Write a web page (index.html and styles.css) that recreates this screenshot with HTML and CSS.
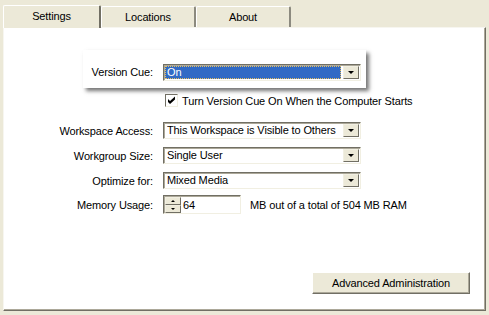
FILE: index.html
```html
<!DOCTYPE html>
<html lang="en">
<head>
    <meta charset="UTF-8">
    <title>Version Cue Preferences</title>
    <link rel="stylesheet" href="styles.css">
</head>
<body>
    <div class="window">
        <div class="tabs">
            <div class="tab active">Settings</div>
            <div class="tab">Locations</div>
            <div class="tab">About</div>
        </div>

        <div class="panel">
            <div class="focus-box">
                <span class="label">Version Cue:</span>
                <div class="select focused">
                    <span class="value">On</span>
                    <span class="drop"></span>
                </div>
            </div>

            <div class="check-row">
                <span class="checkbox">
                    <svg width="9" height="9" viewBox="0 0 9 9"><path d="M1 3 L3 5 L8 0.5 L8 3.5 L3 8 L1 6 Z" fill="#000"/></svg>
                </span>
                <span>Turn Version Cue On When the Computer Starts</span>
            </div>

            <div class="row first">
                <span class="label">Workspace Access:</span>
                <div class="select">
                    <span class="value">This Workspace is Visible to Others</span>
                    <span class="drop"></span>
                </div>
            </div>
            <div class="row">
                <span class="label">Workgroup Size:</span>
                <div class="select">
                    <span class="value">Single User</span>
                    <span class="drop"></span>
                </div>
            </div>
            <div class="row">
                <span class="label">Optimize for:</span>
                <div class="select">
                    <span class="value">Mixed Media</span>
                    <span class="drop"></span>
                </div>
            </div>
            <div class="row memory">
                <span class="label">Memory Usage:</span>
                <div class="spinner">
                    <div class="spin-btns">
                        <span class="spin up"></span>
                        <span class="spin down"></span>
                    </div>
                    <span class="spin-value">64</span>
                </div>
                <span class="note">MB out of a total of 504 MB RAM</span>
            </div>

            <div class="footer">
                <button class="btn">Advanced Administration</button>
            </div>
        </div>
    </div>
</body>
</html>
```

FILE: styles.css
```css
body {
    margin: 0;
    background-color: #ece9d8;
    font-family: "Liberation Sans", Arial, sans-serif;
    font-size: 11px;
    letter-spacing: -0.13px;
    color: #000;
}
.window {
    height: 315px;
    display: flex;
    flex-direction: column;
    padding: 4px 3px 4px 3px;
    box-sizing: border-box;
}
.tabs {
    display: flex;
    align-items: flex-end;
    height: 23px;
    position: relative;
    z-index: 1;
}
.tab {
    width: 92px;
    height: 20px;
    line-height: 20px;
    text-align: center;
    border-top: 1px solid #fff;
    border-left: 1px solid #fff;
    border-right: 2px solid #8c8a7f;
    border-radius: 2px 2px 0 0;
    background-color: #ece9d8;
}
.tab.active {
    width: 95px;
    height: 22px;
    line-height: 20px;
    margin-bottom: -1px;
    border-right-color: #716f64;
}
.panel {
    flex: 1;
    display: flex;
    flex-direction: column;
    background-color: #fff;
    border-top: 1px solid #f7f6f0;
    border-left: 1px solid #f7f6f0;
    border-right: 1px solid #716f64;
    border-bottom: 1px solid #716f64;
    box-shadow: inset -1px -1px 0 #aca899;
}
.label {
    text-align: right;
}
.focus-box {
    display: flex;
    align-items: flex-start;
    margin: 22px 0 0 79px;
    width: 283px;
    height: 38px;
    padding: 14px 5px 0 0;
    box-sizing: border-box;
    background-color: #fff;
    box-shadow: 3px 3px 4px rgba(0, 0, 0, 0.55);
}
.focus-box .label {
    width: 70px;
    margin-right: 10px;
    line-height: 17px;
}
.select {
    width: 198px;
    height: 17px;
    box-sizing: border-box;
    display: flex;
    align-items: center;
    border-top: 1px solid #716f64;
    border-left: 1px solid #716f64;
    border-right: 1px solid #f1efe2;
    border-bottom: 1px solid #f1efe2;
    box-shadow: inset 1px 1px 0 #aca899;
    background-color: #fff;
}
.select .value {
    flex: 1;
    padding-left: 3px;
    line-height: 13px;
    white-space: nowrap;
    overflow: hidden;
}
.select.focused .value {
    margin: 1px 2px 1px 1px;
    padding-left: 2px;
    background-color: #316ac5;
    color: #fff;
    outline: 1px dotted #e8c060;
    outline-offset: -1px;
}
.drop {
    width: 16px;
    height: 13px;
    margin-right: 1px;
    box-sizing: border-box;
    background-color: #ece9d8;
    border-top: 1px solid #f1efe2;
    border-left: 1px solid #f1efe2;
    border-right: 1px solid #716f64;
    border-bottom: 1px solid #716f64;
    display: flex;
    align-items: center;
    justify-content: center;
}
.drop::after {
    content: "";
    border-left: 3px solid transparent;
    border-right: 3px solid transparent;
    border-top: 3px solid #000;
}
.check-row {
    display: flex;
    align-items: center;
    margin: 6px 0 0 161px;
    height: 13px;
}
.checkbox {
    width: 11px;
    height: 11px;
    border-top: 1px solid #716f64;
    border-left: 1px solid #716f64;
    border-right: 1px solid #f1efe2;
    border-bottom: 1px solid #f1efe2;
    background-color: #fff;
    display: flex;
    align-items: center;
    justify-content: center;
    margin-right: 4px;
}
.row {
    display: flex;
    align-items: center;
    margin-top: 8px;
}
.row.first {
    margin-top: 15px;
}
.row .label {
    width: 149px;
    margin-right: 10px;
}
.row.memory {
    margin-top: 6px;
}
.spinner {
    width: 78px;
    height: 19px;
    box-sizing: border-box;
    display: flex;
    align-items: center;
    border-top: 1px solid #716f64;
    border-left: 1px solid #716f64;
    border-right: 1px solid #f1efe2;
    border-bottom: 1px solid #f1efe2;
    box-shadow: inset 1px 1px 0 #aca899;
}
.spin-btns {
    display: flex;
    flex-direction: column;
    width: 16px;
    height: 16px;
    margin: 1px 2px 0 1px;
}
.spin {
    flex: 1;
    box-sizing: border-box;
    background-color: #ece9d8;
    border-top: 1px solid #f1efe2;
    border-left: 1px solid #f1efe2;
    border-right: 1px solid #716f64;
    border-bottom: 1px solid #716f64;
    display: flex;
    align-items: center;
    justify-content: center;
}
.spin.up::after {
    content: "";
    border-left: 2px solid transparent;
    border-right: 2px solid transparent;
    border-bottom: 2px solid #000;
}
.spin.down::after {
    content: "";
    border-left: 2px solid transparent;
    border-right: 2px solid transparent;
    border-top: 2px solid #000;
}
.note {
    margin-left: 9px;
}
.footer {
    margin-top: auto;
    display: flex;
    justify-content: flex-end;
    padding: 0 15px 16px 0;
}
.btn {
    width: 158px;
    height: 22px;
    font-family: inherit;
    font-size: 11px;
    letter-spacing: -0.13px;
    color: #000;
    background-color: #ece9d8;
    border-top: 1px solid #fff;
    border-left: 1px solid #fff;
    border-right: 1px solid #716f64;
    border-bottom: 1px solid #716f64;
    box-shadow: inset -1px -1px 0 #aca899;
    padding: 0;
}
```
